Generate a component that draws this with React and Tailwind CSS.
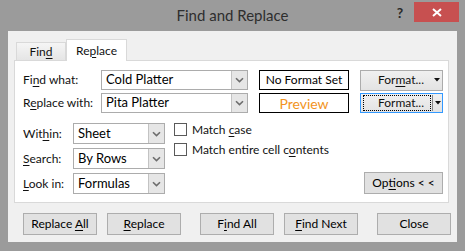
import React from "react";

function K({ children }) {
  return <span className="underline decoration-1 underline-offset-[2px]">{children}</span>;
}

function Chevron() {
  return (
    <svg width="9" height="6" viewBox="0 0 9 6">
      <path d="M1 1.2 L4.5 4.6 L8 1.2" fill="none" stroke="#6d6d6d" strokeWidth="1.6" />
    </svg>
  );
}

function Caret() {
  return (
    <svg width="6" height="4" viewBox="0 0 6 4">
      <path d="M0 0 H6 L3 3.5 Z" fill="#111" />
    </svg>
  );
}

function Combo({ value, size }) {
  return (
    <div className={`flex bg-white border border-[#acacac] ${size}`}>
      <div className="flex-1 flex items-center pl-[4px] text-[13px] text-black">{value}</div>
      <div className="w-[16px] flex items-center justify-center bg-[#e6e6e6] border-l border-[#c3c3c3]">
        <Chevron />
      </div>
    </div>
  );
}

function Btn({ children, size }) {
  return (
    <div
      className={`flex items-center justify-center border border-[#adadad] bg-[#e1e1e1] text-[12px] text-black ${size}`}
    >
      <span>{children}</span>
    </div>
  );
}

function CheckRow({ children }) {
  return (
    <div className="flex items-center gap-[5px] h-[13px]">
      <div className="w-[13px] h-[13px] bg-white border border-[#5a5a5a]" />
      <span className="text-[12px] leading-none">{children}</span>
    </div>
  );
}

export default function App() {
  return (
    <div className="w-[465px] h-[251px] bg-[#9b9b9b] flex flex-col font-['Lato','Noto_Sans',sans-serif] text-[12px] text-[#111]">
      <div className="h-[31px] flex shrink-0">
        <div className="w-[75px]" />
        <div className="flex-1 text-center text-[15px] leading-[31px] text-[#2e2e2e]">Find and Replace</div>
        <div className="w-[75px] flex items-start">
          <div className="w-[24px] h-[24px] pr-[4px] flex items-center justify-center text-[14px] font-bold text-[#2a2a2a]">
            ?
          </div>
          <div className="mt-[2px] w-[45px] h-[20px] bg-[#c75050] flex items-center justify-center">
            <svg width="10" height="9" viewBox="0 0 10 9">
              <path d="M1 1 L9 8 M9 1 L1 8" stroke="#fff" strokeWidth="2" />
            </svg>
          </div>
        </div>
      </div>

      <div className="ml-[8px] w-[449px] h-[211px] bg-[#f0f0f0] flex flex-col">
        <div className="h-[29px] flex items-end pl-[8px] shrink-0">
          <div className="w-[50px] h-[18px] border border-b-0 border-[#d9d9d9] bg-linear-to-b from-[#f5f5f5] to-[#e5e5e5] flex items-center justify-center text-[12px]">
            <span>
              Fin<K>d</K>
            </span>
          </div>
          <div className="relative z-10 -mb-[1px] w-[61px] h-[22px] border border-b-0 border-[#d9d9d9] bg-white flex items-center justify-center text-[12px]">
            <span>
              Re<K>p</K>lace
            </span>
          </div>
        </div>

        <div className="ml-[6px] w-[435px] h-[143px] bg-white border border-[#d9d9d9] pl-[8px] pt-[9px] flex flex-col shrink-0">
          <div className="flex items-center h-[20px]">
            <div className="w-[78px]">
              Fi<K>n</K>d what:
            </div>
            <Combo value="Cold Platter" size="w-[147px] h-[20px]" />
            <div className="ml-[11px] w-[90px] h-[20px] border border-black flex items-center justify-center text-[12px] text-black">
              No Format Set
            </div>
            <div className="ml-[11px] w-[83px] h-[21px] border border-[#acacac] bg-linear-to-b from-[#f0f0f0] to-[#e3e3e3] flex items-center">
              <div className="w-[71px] flex justify-end pr-[8px]">
                <span>
                  For<K>m</K>at...
                </span>
              </div>
              <div className="flex-1 flex items-center justify-center">
                <Caret />
              </div>
            </div>
          </div>

          <div className="mt-[3px] flex items-center h-[20px]">
            <div className="w-[78px]">
              R<K>e</K>place with:
            </div>
            <Combo value="Pita Platter" size="w-[147px] h-[20px]" />
            <div className="ml-[11px] w-[90px] h-[20px] border border-black flex items-center justify-center text-[14px] text-[#f29423]">
              Preview
            </div>
            <div className="ml-[11px] w-[83px] h-[20px] border border-[#3399ff] bg-linear-to-b from-[#f0f0f0] to-[#e3e3e3] flex items-center">
              <div className="ml-[2px] w-[68px] h-[16px] border border-dotted border-black flex items-center justify-end pr-[6px]">
                Format...
              </div>
              <div className="ml-[1px] w-[1px] h-[16px] bg-[#8a8a8a]" />
              <div className="flex-1 flex items-center justify-center">
                <Caret />
              </div>
            </div>
          </div>

          <div className="mt-[10px] flex">
            <div className="flex flex-col gap-[4px]">
              <div className="flex items-center h-[21px]">
                <div className="w-[50px]">
                  Wit<K>h</K>in:
                </div>
                <Combo value="Sheet" size="w-[92px] h-[21px]" />
              </div>
              <div className="flex items-center h-[21px]">
                <div className="w-[50px]">
                  <K>S</K>earch:
                </div>
                <Combo value="By Rows" size="w-[92px] h-[21px]" />
              </div>
              <div className="flex items-center h-[21px]">
                <div className="w-[50px]">
                  <K>L</K>ook in:
                </div>
                <Combo value="Formulas" size="w-[92px] h-[21px]" />
              </div>
            </div>

            <div className="ml-[9px] flex flex-col">
              <CheckRow>
                Match <K>c</K>ase
              </CheckRow>
              <div className="mt-[7px]">
                <CheckRow>
                  Match entire cell c<K>o</K>ntents
                </CheckRow>
              </div>
            </div>

            <div className="ml-auto mr-[5px] self-end">
              <Btn size="w-[79px] h-[22px]">
                Op<K>t</K>ions &lt; &lt;
              </Btn>
            </div>
          </div>
        </div>

        <div className="mt-[10px] flex pl-[15px]">
          <Btn size="w-[74px] h-[22px]">
            Replace <K>A</K>ll
          </Btn>
          <div className="ml-[10px]">
            <Btn size="w-[74px] h-[22px]">
              <K>R</K>eplace
            </Btn>
          </div>
          <div className="ml-[19px]">
            <Btn size="w-[74px] h-[22px]">
              F<K>i</K>nd All
            </Btn>
          </div>
          <div className="ml-[10px]">
            <Btn size="w-[74px] h-[22px]">
              <K>F</K>ind Next
            </Btn>
          </div>
          <div className="ml-[19px]">
            <Btn size="w-[74px] h-[22px]">Close</Btn>
          </div>
        </div>
      </div>
    </div>
  );
}
